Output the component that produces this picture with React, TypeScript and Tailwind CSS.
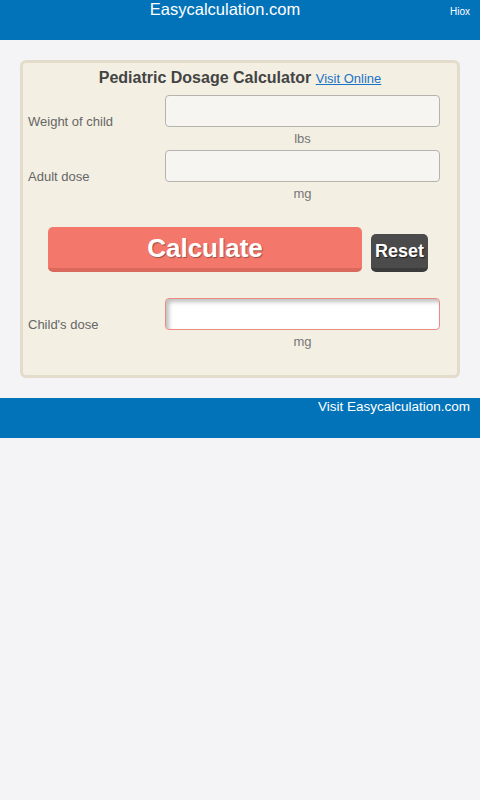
const FONT = { fontFamily: '"Liberation Sans", Arial, sans-serif' };

function Row({ label, unit, result }: { label: string; unit: string; result?: boolean }) {
  return (
    <div className="flex items-center py-[2px]">
      <div className="w-[137px] shrink-0 text-[13px] text-[#666] pt-[2px]">{label}</div>
      <div className="w-[275px] flex flex-col items-center">
        <input
          className={`w-full h-[32px] rounded-[4px] border outline-none ${
            result
              ? 'bg-white border-[#ee8a86] shadow-[inset_3px_3px_4px_rgba(0,0,0,0.25)]'
              : 'bg-[#f6f5f2] border-[#b5b3ae]'
          }`}
        />
        <div className="h-[19px] leading-[24px] text-[13px] text-[#777]">{unit}</div>
      </div>
    </div>
  );
}

export default function App() {
  return (
    <div className="min-h-[800px] bg-[#f4f3f6]" style={FONT}>
      <header className="h-[40px] bg-[#0373b9] relative">
        <div className="text-center text-white text-[16.5px] leading-[19px] pr-[30px]">Easycalculation.com</div>
        <span className="absolute right-[10px] top-[4px] text-[10px] text-white">Hiox</span>
      </header>

      <div className="px-[20px] pt-[20px]">
        <div className="rounded-[6px] border-[3px] border-[#e3dccb] bg-[#f3efe3] pl-[5px] pr-[17px] pt-[3px] pb-[24px]">
          <div className="text-center leading-[24px] pl-[12px]">
            <span className="text-[16px] font-bold text-[#444]">Pediatric Dosage Calculator</span>{' '}
            <a href="#" className="text-[13px] text-[#1a73c6] underline">Visit Online</a>
          </div>
          <div className="mt-[2px]">
            <Row label="Weight of child" unit="lbs" />
            <Row label="Adult dose" unit="mg" />
          </div>
          <div className="flex items-end pl-[20px] mt-[24px] mb-[24px]">
            <button className="w-[314px] h-[45px] rounded-[5px] bg-[#f3786b] border-b-[4px] border-[#d9685d] text-white font-bold text-[26px] leading-[40px] [text-shadow:1px_1px_1px_rgba(0,0,0,0.35)]">
              Calculate
            </button>
            <button className="ml-[9px] w-[57px] h-[38px] rounded-[5px] bg-[#4b4b4b] border-b-[4px] border-[#3b3b3b] text-white font-bold text-[18px] leading-[32px] [text-shadow:1px_1px_1px_rgba(0,0,0,0.6)]">
              Reset
            </button>
          </div>
          <Row label="Child's dose" unit="mg" result />
        </div>
      </div>

      <footer className="mt-[20px] h-[40px] bg-[#0373b9] text-right pr-[10px] text-white text-[13.5px] leading-[18px]">
        Visit Easycalculation.com
      </footer>
    </div>
  );
}
